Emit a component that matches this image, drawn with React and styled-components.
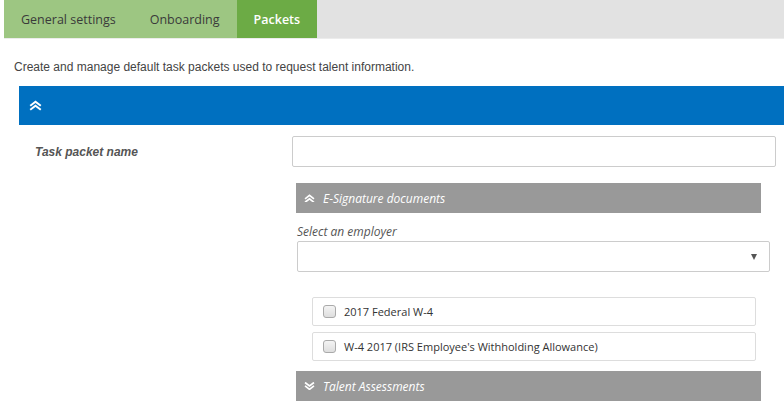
import styled, { createGlobalStyle } from "styled-components"

const Global = createGlobalStyle`
  body {
    margin: 0;
    background: #fff;
    font-family: "Liberation Sans", Arial, sans-serif;
  }
`

const tabs = ["General settings", "Onboarding", "Packets"]
const documents = ["2017 Federal W-4", "W-4 2017 (IRS Employee's Withholding Allowance)"]

const TabBar = styled.div`
  display: flex;
  height: 38px;
  margin-left: 4px;
  background: #e2e2e2;
  border-bottom: 1px solid #ececec;
`
const Tab = styled.div`
  display: flex;
  align-items: center;
  padding: 0 17px;
  font-family: "Open Sans", sans-serif;
  font-size: 12.5px;
  color: ${p => (p.active ? "#fff" : "#3a3a3a")};
  font-weight: ${p => (p.active ? 600 : 400)};
  background: ${p => (p.active ? "#6cab45" : "#9dc682")};
`
const Intro = styled.p`
  margin: 21px 0 0 14px;
  font-size: 12px;
  color: #444;
`
const Panel = styled.div`
  margin: 12px 0 0 19px;
`
const BlueBar = styled.div`
  display: flex;
  align-items: center;
  height: 39px;
  padding-left: 10px;
  background: #0070c0;
`
const Body = styled.div`
  display: grid;
  grid-template-columns: 273px 484px;
  padding-top: 11px;
`
const Label = styled.div`
  display: flex;
  align-items: center;
  height: 31px;
  padding-left: 16px;
  font-size: 12px;
  font-weight: bold;
  font-style: italic;
  color: #555;
`
const Column = styled.div`
  display: flex;
  flex-direction: column;
`
const TextInput = styled.div`
  height: 29px;
  border: 1px solid #ccc;
  border-radius: 2px;
`
const SectionBar = styled.div`
  display: flex;
  align-items: center;
  gap: 8px;
  width: 457px;
  height: 30px;
  margin: ${p => p.margin};
  padding-left: 8px;
  background: #999;
  color: #fff;
  font-family: "Open Sans", sans-serif;
  font-style: italic;
  font-size: 12px;
`
const FieldLabel = styled.div`
  margin: 10px 0 1px 5px;
  font-family: "Open Sans", sans-serif;
  font-style: italic;
  font-size: 12px;
  color: #555;
`
const Select = styled.div`
  display: flex;
  align-items: center;
  justify-content: flex-end;
  width: 459px;
  height: 29px;
  margin-left: 5px;
  padding-right: 12px;
  border: 1px solid #ccc;
  border-radius: 2px;
`
const Caret = styled.span`
  width: 0;
  height: 0;
  border-left: 3.5px solid transparent;
  border-right: 3.5px solid transparent;
  border-top: 6px solid #555;
`
const DocList = styled.div`
  display: flex;
  flex-direction: column;
  gap: 6px;
  margin: 25px 0 0 20px;
  width: 444px;
`
const DocRow = styled.label`
  display: flex;
  align-items: center;
  gap: 8px;
  height: 27px;
  padding-left: 10px;
  border: 1px solid #ddd;
  border-radius: 2px;
  font-family: "Open Sans", sans-serif;
  font-size: 11px;
  color: #333;
`
const Box = styled.span`
  width: 11px;
  height: 11px;
  border: 1px solid #aaa;
  border-radius: 3px;
  background: linear-gradient(#f4f4f4, #dedede);
`

const Chevrons = ({ down, size = 13 }) => (
  <svg width={size} height={size * 0.8} viewBox="0 0 13 10" fill="none" stroke="#fff" strokeWidth="2" strokeLinecap="square">
    <g transform={down ? "rotate(180 6.5 5)" : undefined}>
      <polyline points="2,5 6.5,1.5 11,5" />
      <polyline points="2,9 6.5,5.5 11,9" />
    </g>
  </svg>
)

export default function App() {
  return (
    <>
      <Global />
      <TabBar>
        {tabs.map(t => (
          <Tab key={t} active={t === "Packets"}>{t}</Tab>
        ))}
      </TabBar>
      <Intro>Create and manage default task packets used to request talent information.</Intro>
      <Panel>
        <BlueBar>
          <Chevrons />
        </BlueBar>
        <Body>
          <Label>Task packet name</Label>
          <Column>
            <TextInput />
            <SectionBar margin="16px 0 0 4px">
              <Chevrons size={11} />
              E-Signature documents
            </SectionBar>
            <FieldLabel>Select an employer</FieldLabel>
            <Select>
              <Caret />
            </Select>
            <DocList>
              {documents.map(d => (
                <DocRow key={d}>
                  <Box />
                  {d}
                </DocRow>
              ))}
            </DocList>
            <SectionBar margin="10px 0 0 4px">
              <Chevrons size={11} down />
              Talent Assessments
            </SectionBar>
          </Column>
        </Body>
      </Panel>
    </>
  )
}
